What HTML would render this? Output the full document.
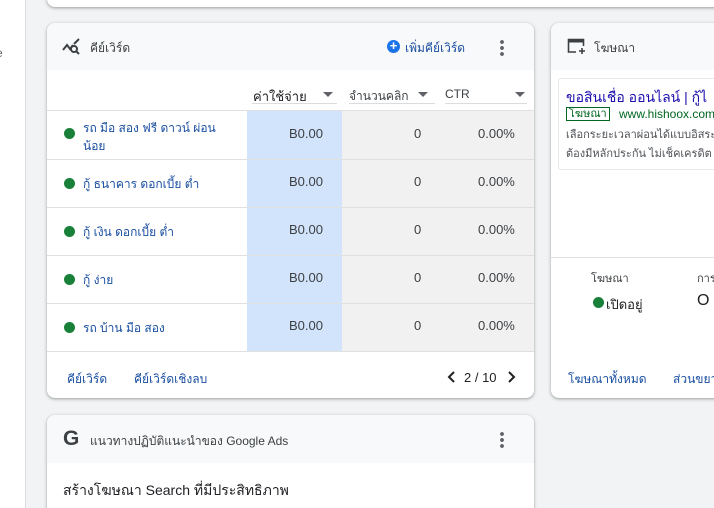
<!DOCTYPE html>
<html><head><meta charset="utf-8"><style>
*{box-sizing:border-box;margin:0;padding:0}
html,body{width:714px;height:508px;overflow:hidden}
body{background:#f1f3f4;font-family:"Liberation Sans","Noto Sans CJK SC",sans-serif;position:relative;color:#3c4043}
.side{position:absolute;left:0;top:0;width:26px;height:508px;background:#fff;border-right:1px solid #dadce0}
.card{position:absolute;background:#fff;border-radius:8px;box-shadow:0 1px 2px rgba(60,64,67,.3),0 1px 3px 1px rgba(60,64,67,.15);overflow:hidden}
.hdr{position:absolute;left:0;right:0;top:0;height:47px;background:#f8f9fa}
.t{position:absolute;white-space:nowrap}
.blue{color:#1a4fa0}
.dot{position:absolute;width:11px;height:11px;border-radius:50%;background:#188038}
.row{position:absolute;left:0;width:487px;border-top:1px solid #e0e0e0}
.n{position:absolute;font-size:13px;color:#3c4043;white-space:nowrap}
.ar{position:absolute;width:0;height:0;border-left:5px solid transparent;border-right:5px solid transparent;border-top:5px solid #5f6368}
</style></head><body>
<div class="side"><div class="t" style="left:-4px;top:46px;font-size:12px;color:#5f6368">e</div></div>
<div class="card" style="left:47px;top:-10px;width:680px;height:17px"></div>

<div class="card" style="left:47px;top:23px;width:487px;height:375px">
 <div class="hdr"></div>
 <svg class="t" style="left:15px;top:15px" width="20" height="18" viewBox="0 0 20 18"><path d="M1 12 L5 7 L8 11 L11 7" fill="none" stroke="#3c4043" stroke-width="2"/><circle cx="12" cy="11" r="3" fill="none" stroke="#3c4043" stroke-width="2"/><path d="M14 13 L17 16 M12 6 L17 1" stroke="#3c4043" stroke-width="2"/></svg>
 <div class="t" style="left:43px;top:16px;font-size:12px">คีย์เวิร์ด</div>
 <div class="t" style="left:340px;top:17px;width:13px;height:13px;border-radius:50%;background:#1a73e8;color:#fff;font-size:13px;line-height:12px;text-align:center;font-weight:bold">+</div>
 <div class="t blue" style="left:358px;top:16px;font-size:12px">เพิ่มคีย์เวิร์ด</div>
 <div class="t" style="left:453px;top:16px;width:4px;height:17px;background:radial-gradient(circle,#5f6368 1.8px,transparent 2px) 0 0/4px 6px"></div>
 <div style="position:absolute;left:200px;top:87px;width:95px;height:241px;background:#d2e3fc"></div>
 <div style="position:absolute;left:295px;top:87px;width:192px;height:241px;background:#f1f1f1"></div>
 <div class="t" style="left:206px;top:63px;font-size:13px;color:#202124">ค่าใช้จ่าย</div>
 <div class="ar" style="left:276px;top:69px"></div>
 <div class="t" style="left:205px;top:80px;width:85px;border-top:1px solid #dadce0"></div>
 <div class="t" style="left:302px;top:64px;font-size:12px">จำนวนคลิก</div>
 <div class="ar" style="left:371px;top:69px"></div>
 <div class="t" style="left:302px;top:80px;width:86px;border-top:1px solid #dadce0"></div>
 <div class="t" style="left:398px;top:64px;font-size:12px">CTR</div>
 <div class="ar" style="left:468px;top:69px"></div>
 <div class="t" style="left:398px;top:80px;width:82px;border-top:1px solid #dadce0"></div>

 <div class="row" style="top:87px;height:49px"><div class="dot" style="left:17px;top:17px"></div><div class="t blue" style="left:36px;top:8px;font-size:12px;line-height:18px">รถ มือ สอง ฟรี ดาวน์ ผ่อน<br>น้อย</div></div>
 <div class="row" style="top:136px;height:48px"><div class="dot" style="left:17px;top:18px"></div><div class="t blue" style="left:36px;top:15px;font-size:12px">กู้ ธนาคาร ดอกเบี้ย ต่ำ</div></div>
 <div class="row" style="top:184px;height:48px"><div class="dot" style="left:17px;top:18px"></div><div class="t blue" style="left:36px;top:15px;font-size:12px">กู้ เงิน ดอกเบี้ย ต่ำ</div></div>
 <div class="row" style="top:232px;height:48px"><div class="dot" style="left:17px;top:18px"></div><div class="t blue" style="left:36px;top:15px;font-size:12px">กู้ ง่าย</div></div>
 <div class="row" style="top:280px;height:48px"><div class="dot" style="left:17px;top:18px"></div><div class="t blue" style="left:36px;top:15px;font-size:12px">รถ บ้าน มือ สอง</div></div>
 <div class="row" style="top:328px;height:1px"></div>
 <div class="n" style="left:242px;top:103px">B0.00</div><div class="n" style="left:367px;top:103px">0</div><div class="n" style="left:431px;top:103px">0.00%</div>
 <div class="n" style="left:242px;top:151px">B0.00</div><div class="n" style="left:367px;top:151px">0</div><div class="n" style="left:431px;top:151px">0.00%</div>
 <div class="n" style="left:242px;top:199px">B0.00</div><div class="n" style="left:367px;top:199px">0</div><div class="n" style="left:431px;top:199px">0.00%</div>
 <div class="n" style="left:242px;top:247px">B0.00</div><div class="n" style="left:367px;top:247px">0</div><div class="n" style="left:431px;top:247px">0.00%</div>
 <div class="n" style="left:242px;top:295px">B0.00</div><div class="n" style="left:367px;top:295px">0</div><div class="n" style="left:431px;top:295px">0.00%</div>
 <div class="t blue" style="left:20px;top:347px;font-size:12px">คีย์เวิร์ด</div>
 <div class="t blue" style="left:87px;top:347px;font-size:12px">คีย์เวิร์ดเชิงลบ</div>
 <svg class="t" style="left:400px;top:347px" width="10" height="14" viewBox="0 0 10 14"><path d="M7 2 L2 7 L7 12" fill="none" stroke="#202124" stroke-width="2"/></svg>
 <div class="t" style="left:417px;top:347px;font-size:13px;color:#202124">2 / 10</div>
 <svg class="t" style="left:459px;top:347px" width="10" height="14" viewBox="0 0 10 14"><path d="M3 2 L8 7 L3 12" fill="none" stroke="#202124" stroke-width="2"/></svg>
</div>

<div class="card" style="left:551px;top:23px;width:180px;height:375px">
 <div class="hdr"></div>
 <svg class="t" style="left:16px;top:15px" width="20" height="17" viewBox="0 0 20 17"><path d="M9 14 H1.5 V1.5 H16.5 V8" fill="none" stroke="#3c4043" stroke-width="1.6"/><path d="M1.5 3 H16.5" stroke="#3c4043" stroke-width="3"/><path d="M15 10 V16 M12 13 H18" stroke="#3c4043" stroke-width="1.6"/></svg>
 <div class="t" style="left:43px;top:16px;font-size:12px">โฆษณา</div>
 <div style="position:absolute;left:7px;top:55px;width:180px;height:92px;border:1px solid #e8eaed;border-radius:3px"></div>
 <div class="t" style="left:15px;top:64px;font-size:14px;color:#1a0dab">ขอสินเชื่อ ออนไลน์ | กู้ไ</div>
 <div class="t" style="left:15px;top:84px;font-size:11px;color:#006621;border:1px solid #006621;padding:0 2px;line-height:12px">โฆษณา</div>
 <div class="t" style="left:68px;top:84px;font-size:12px;color:#006621">www.hishoox.com</div>
 <div class="t" style="left:15px;top:102px;font-size:11px;color:#4d5156">เลือกระยะเวลาผ่อนได้แบบอิสระ</div>
 <div class="t" style="left:15px;top:121px;font-size:11px;color:#4d5156">ต้องมีหลักประกัน ไม่เช็คเครดิต</div>
 <div style="position:absolute;left:0;right:0;top:234px;border-top:1px solid #e0e0e0"></div>
 <div class="t" style="left:40px;top:246px;font-size:11px">โฆษณา</div>
 <div class="t" style="left:146px;top:246px;font-size:11px">การ</div>
 <div class="dot" style="left:42px;top:274px"></div>
 <div class="t" style="left:55px;top:271px;font-size:13px;color:#202124">เปิดอยู่</div>
 <div class="t" style="left:146px;top:269px;font-size:16px;color:#202124">O</div>
 <div class="t blue" style="left:17px;top:347px;font-size:12px">โฆษณาทั้งหมด</div>
 <div class="t blue" style="left:122px;top:347px;font-size:12px">ส่วนขยาย</div>
</div>

<div class="card" style="left:47px;top:415px;width:487px;height:110px">
 <div class="hdr" style="height:48px"></div>
 <div class="t" style="left:16px;top:12px;font-size:21px;font-weight:bold;color:#3c4043">G</div>
 <div class="t" style="left:43px;top:17px;font-size:12px">แนวทางปฏิบัติแนะนำของ Google Ads</div>
 <div class="t" style="left:453px;top:16px;width:4px;height:17px;background:radial-gradient(circle,#5f6368 1.8px,transparent 2px) 0 0/4px 6px"></div>
 <div class="t" style="left:16px;top:65px;font-size:14px;color:#202124">สร้างโฆษณา Search ที่มีประสิทธิภาพ</div>
</div>
</body></html>
